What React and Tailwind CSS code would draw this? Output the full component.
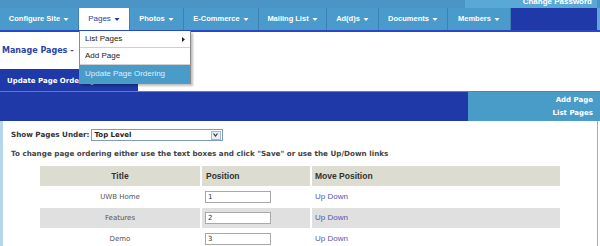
import React from 'react'

const navItems = [
  { label: 'Configure Site', w: 'w-[79px]' },
  { label: 'Pages', w: 'w-[51px]', active: true },
  { label: 'Photos', w: 'w-[54px]' },
  { label: 'E-Commerce', w: 'w-[75px]' },
  { label: 'Mailing List', w: 'w-[68px]' },
  { label: 'Ad(d)s', w: 'w-[52px]' },
  { label: 'Documents', w: 'w-[69px]' },
  { label: 'Members', w: 'w-[63px]' },
]

const rows = [
  { title: 'UWB Home', pos: '1' },
  { title: 'Features', pos: '2' },
  { title: 'Demo', pos: '3' },
]

function Caret({ dark }) {
  return (
    <svg width="6" height="5" viewBox="0 0 6 5" className="ml-[3px]">
      <path d="M0.5 1 L5.5 1 L3 4 Z" fill={dark ? '#1e3aa6' : '#ffffff'} />
    </svg>
  )
}

export default function App() {
  return (
    <div className="relative w-[600px] h-[246px] overflow-hidden bg-white font-['Liberation_Sans',Arial,sans-serif]">
      {/* top strip */}
      <div className="flex h-[8px] bg-[#4a94c6]">
        <div className="flex-1" />
        <div className="w-[132px] bg-[#5aa8d6] flex items-end justify-end pr-[5px] overflow-hidden">
          <span className="text-[8px] leading-[12px] font-bold text-white">Change Password</span>
        </div>
        <div className="w-[3px]" />
      </div>

      {/* nav */}
      <div className="flex h-[22px] bg-[#4a9acb]">
        {navItems.map((item) => (
          <div
            key={item.label}
            className={`${item.w} flex items-center justify-center border-r border-[#3d80b4] text-[7.5px] font-bold ${
              item.active ? 'bg-white text-[#2a44a8] font-normal text-[8px]' : 'text-white'
            }`}
          >
            {item.label}
            <Caret dark={item.active} />
          </div>
        ))}
        <div className="flex-1 bg-[#1f3aa8]" />
        <div className="w-[3px] bg-[#5aa8d6]" />
      </div>
      <div className="h-[2px] bg-[#2846c8]" />

      {/* heading */}
      <div className="pt-[13px] pl-[2px] h-[37px] font-['DejaVu_Sans',Verdana,sans-serif] text-[8px] leading-[12px] font-bold text-[#2a44a8]">
        Manage Pages -
      </div>

      {/* tab */}
      <div className="w-[138px] h-[22px] bg-[#1f3aa8] flex items-center pl-[7px] pt-[2px] font-['DejaVu_Sans',Verdana,sans-serif] text-[7px] font-bold text-white whitespace-nowrap overflow-hidden">
        Update Page Ordering
      </div>

      {/* band */}
      <div className="flex h-[30px] border-t border-[#5b7fd0]">
        <div className="flex-1 bg-[#1f3aa8]" />
        <div className="w-[132px] bg-[#4a9cc8] flex flex-col items-end justify-center gap-[3px] pr-[7px] font-['DejaVu_Sans',Verdana,sans-serif] text-[7px] font-bold text-white leading-[10px]">
          <span>Add Page</span>
          <span>List Pages</span>
        </div>
      </div>

      {/* content */}
      <div className="h-[125px] w-[598px] border-l-[3px] border-l-[#b6d6ec] border-r border-r-[#8fb3cc] pl-[8px] pt-[8px] font-['DejaVu_Sans',Verdana,sans-serif]">
        <div className="flex items-center h-[12px] gap-[1px] text-[7.2px] font-bold text-[#333]">
          <span>Show Pages Under:</span>
          <div className="flex items-center w-[132px] h-[12px] border border-[#7f9db9] bg-white">
            <span className="flex-1 pl-[3px] text-[7px] text-[#222]">Top Level</span>
            <div className="w-[10px] h-[9px] mr-[1px] flex items-center justify-center border border-[#a9bad0] bg-[#e8eef8]">
              <svg width="5" height="4" viewBox="0 0 5 4">
                <path d="M0.5 0.5 L2.5 3 L4.5 0.5" stroke="#333" strokeWidth="1.2" fill="none" />
              </svg>
            </div>
          </div>
        </div>
        <div className="mt-[8px] text-[7.2px] leading-[10px] font-bold text-[#444]">
          To change page ordering either use the text boxes and click "Save" or use the Up/Down links
        </div>

        <div className="mt-[7px] ml-[29px] w-[520px] font-['Liberation_Sans',Arial,sans-serif]">
          <div className="flex h-[20px] bg-[#dcdcd0] text-[8.5px] font-bold text-[#333] mb-[1px]">
            <div className="w-[160px] flex items-center justify-center">Title</div>
            <div className="w-[110px] flex items-center pl-[4px] border-l-2 border-white">Position</div>
            <div className="flex-1 flex items-center pl-[3px] border-l-2 border-white">Move Position</div>
          </div>
          {rows.map((r, i) => (
            <div
              key={r.title}
              className={`flex h-[20px] mb-[1px] ${i % 2 === 1 ? 'bg-[#e0e0e0]' : 'bg-white'}`}
            >
              <div className="w-[160px] flex items-center justify-center font-['DejaVu_Sans',Verdana,sans-serif] text-[7px] text-[#555]">
                {r.title}
              </div>
              <div className="w-[110px] flex items-center pl-[3px] border-l-2 border-white">
                <input
                  readOnly
                  value={r.pos}
                  className="w-[66px] h-[12px] border border-[#a8a8a8] bg-white px-[2px] font-['DejaVu_Sans',Verdana,sans-serif] text-[7px] text-[#333] outline-none"
                />
              </div>
              <div className="flex-1 flex items-center pl-[3px] border-l-2 border-white text-[8px] text-[#5656b0]">
                Up Down
              </div>
            </div>
          ))}
        </div>
      </div>

      {/* dropdown */}
      <div className="absolute left-[79px] top-[31px] w-[112px] bg-white border border-t-0 border-[#8a8a8a] shadow-[2px_2px_2px_rgba(0,0,0,0.25)] text-[8px] text-[#222]">
        <div className="flex items-center justify-between h-[17px] pl-[5px] pr-[5px] border-b border-[#d0d0d0]">
          <span>List Pages</span>
          <svg width="3" height="5" viewBox="0 0 3 5">
            <path d="M0 0 L3 2.5 L0 5 Z" fill="#222" />
          </svg>
        </div>
        <div className="flex items-center h-[17px] pl-[5px] border-b border-[#d0d0d0]">Add Page</div>
        <div className="flex items-center h-[18px] pl-[5px] bg-[#4a9cc8] text-[#dcefff]">Update Page Ordering</div>
      </div>
    </div>
  )
}
